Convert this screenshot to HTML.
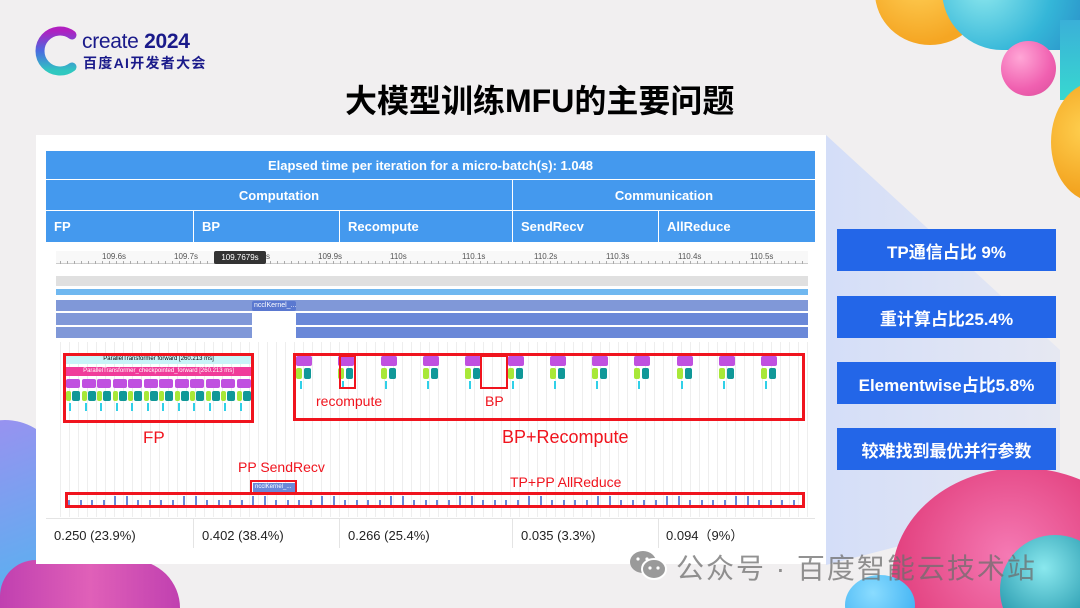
<!DOCTYPE html>
<html><head><meta charset="utf-8">
<style>
*{margin:0;padding:0;box-sizing:border-box}
html,body{width:1080px;height:608px;overflow:hidden}
body{background:#f1eff0;font-family:"Liberation Sans","Noto Sans CJK SC",sans-serif}
#wrap{position:relative;width:1080px;height:608px;overflow:hidden}
.abs{position:absolute}
.blob{position:absolute;border-radius:50%}
.hd{position:absolute;background:#4499ee;color:#fff;font-weight:bold;font-size:13px;display:flex;align-items:center}
.rb{position:absolute;left:837px;width:219px;height:42px;background:#2366e8;color:#fff;font-weight:bold;font-size:17px;display:flex;align-items:center;justify-content:center}
.red{position:absolute;border:3px solid #f0141e}
.rt{position:absolute;color:#f0141e;font-size:15px}
.val{position:absolute;top:528px;font-size:13px;color:#222;line-height:15px}
</style></head><body><div id="wrap">
<div class="blob" style="left:875px;top:-60px;width:110px;height:105px;background:radial-gradient(circle at 40% 35%,#ffd25a,#f5a623 70%)"></div>
<div class="abs" style="left:942px;top:-40px;width:138px;height:90px;border-radius:0 0 0 60px;background:radial-gradient(circle at 30% 30%,#8ee8ee,#34b6d8 60%,#2a90c8)"></div>
<div class="abs" style="left:1060px;top:20px;width:20px;height:80px;background:linear-gradient(#3ab0d8,#38d8d0)"></div>
<div class="blob" style="left:1001px;top:41px;width:55px;height:55px;background:radial-gradient(circle at 35% 30%,#ffa6d6,#f060b0 60%,#d84e9a)"></div>
<div class="blob" style="left:1051px;top:82px;width:90px;height:120px;background:radial-gradient(circle at 40% 40%,#ffd050,#f3a420 70%)"></div>
<div class="abs" style="left:826px;top:135px;width:234px;height:430px;background:linear-gradient(90deg,#d4def8,#e6e8f2);clip-path:polygon(0 0,100% 50%,100% 86%,0 100%)"></div>
<div class="blob" style="left:892px;top:468px;width:260px;height:220px;background:radial-gradient(circle at 45% 40%,#f57ab4,#e2407e 60%,#c83068)"></div>
<div class="blob" style="left:1000px;top:535px;width:110px;height:110px;background:radial-gradient(circle at 40% 30%,#8ae8ee,#2a9cb0 60%,#1c6a80)"></div>
<div class="blob" style="left:845px;top:575px;width:70px;height:60px;background:radial-gradient(circle at 40% 30%,#8adcff,#2ea8f0)"></div>
<div class="blob" style="left:-70px;top:420px;width:150px;height:200px;background:linear-gradient(160deg,#a08ef0,#4ab8f0)"></div>
<div class="abs" style="left:0;top:560px;width:180px;height:48px;border-radius:60px 80px 0 0;background:linear-gradient(90deg,#c040b0,#e060b8,#c040b0)"></div>

<svg class="abs" style="left:30px;top:25px" width="50" height="52" viewBox="0 0 50 52">
<defs><linearGradient id="lg" x1="0" y1="0" x2="0" y2="1"><stop offset="0" stop-color="#b020c0"/><stop offset="0.5" stop-color="#4a6be0"/><stop offset="1" stop-color="#30c8c0"/></linearGradient></defs>
<path d="M42 10 A20 20 0 1 0 42 42" fill="none" stroke="url(#lg)" stroke-width="9" stroke-linecap="round"/></svg>
<div class="abs" style="left:82px;top:30px;font-size:21px;color:#1a1a8a;letter-spacing:-0.3px">create <b>2024</b></div>
<div class="abs" style="left:83px;top:53px;font-size:14px;color:#1a1a8a;font-weight:bold;letter-spacing:1.3px">百度AI开发者大会</div>

<div class="abs" style="left:345px;top:76px;font-size:32px;font-weight:bold;color:#000">大模型训练MFU的主要问题</div>

<div class="abs" style="left:36px;top:135px;width:790px;height:429px;background:#fff"></div>
<div class="hd" style="left:46px;top:151px;width:769px;height:28px;justify-content:center">Elapsed time per iteration for a micro-batch(s): 1.048</div>
<div class="hd" style="left:46px;top:180px;width:466px;height:30px;justify-content:center">Computation</div>
<div class="hd" style="left:513px;top:180px;width:302px;height:30px;justify-content:center">Communication</div>
<div class="hd" style="left:46px;top:211px;width:147px;height:31px;padding-left:8px">FP</div>
<div class="hd" style="left:194px;top:211px;width:145px;height:31px;padding-left:8px">BP</div>
<div class="hd" style="left:340px;top:211px;width:172px;height:31px;padding-left:8px">Recompute</div>
<div class="hd" style="left:513px;top:211px;width:145px;height:31px;padding-left:8px">SendRecv</div>
<div class="hd" style="left:659px;top:211px;width:156px;height:31px;padding-left:8px">AllReduce</div>

<div id="tl" class="abs" style="left:0;top:0;width:1080px;height:608px"></div>
<div class="abs" style="left:56px;top:251px;width:752px;height:13px;border-bottom:1px solid #ccc;background:#f8f8f8"></div>
<div id="tl2" class="abs" style="left:0;top:0;width:1px;height:1px"></div>
<div class="abs" style="left:214px;top:251px;width:52px;height:13px;background:#333;color:#fff;font-size:8px;line-height:13px;text-align:center;border-radius:2px">109.7679s</div>
<div class="abs" style="left:56px;top:276px;width:752px;height:10px;background:#e0e0e0"></div>
<div class="abs" style="left:56px;top:289px;width:752px;height:6px;background:#70b8f0"></div>
<div class="abs" style="left:56px;top:300px;width:752px;height:11px;background:#8098d8"></div>
<div class="abs" style="left:56px;top:313px;width:196px;height:12px;background:#8098d8"></div>
<div class="abs" style="left:296px;top:313px;width:512px;height:12px;background:#6a88d8"></div>
<div class="abs" style="left:56px;top:327px;width:196px;height:11px;background:#8098d8"></div>
<div class="abs" style="left:296px;top:327px;width:512px;height:11px;background:#6a88d8"></div>
<div class="abs" style="left:252px;top:301px;width:44px;height:10px;background:#5a78d0;color:#fff;font-size:7px;line-height:10px;padding-left:2px;border-radius:2px">ncclKernel_...</div>

<div class="abs" style="left:66px;top:355px;width:185px;height:9px;background:#c8f4f8;font-size:6px;text-align:center;line-height:9px">ParallelTransformer forward [260.213 ms]</div>
<div class="abs" style="left:66px;top:367px;width:185px;height:9px;background:#f03c9a;color:#fff;font-size:6px;text-align:center;line-height:9px">ParallelTransformer_checkpointed_forward [260.213 ms]</div>

<div class="red" style="left:63px;top:353px;width:191px;height:70px"></div>
<div class="red" style="left:293px;top:353px;width:512px;height:68px"></div>
<div class="red" style="left:339px;top:355px;width:17px;height:34px;border-width:2px"></div>
<div class="red" style="left:480px;top:355px;width:28px;height:34px;border-width:2px"></div>
<div class="rt" style="left:143px;top:428px;font-size:17px">FP</div>
<div class="rt" style="left:316px;top:393px;font-size:14px">recompute</div>
<div class="rt" style="left:485px;top:393px;font-size:14px">BP</div>
<div class="rt" style="left:502px;top:427px;font-size:18px">BP+Recompute</div>
<div class="rt" style="left:238px;top:459px;font-size:14px">PP SendRecv</div>
<div class="rt" style="left:510px;top:474px;font-size:14px">TP+PP AllReduce</div>
<div class="abs" style="left:253px;top:483px;width:42px;height:9px;background:#6a88d8;color:#fff;font-size:6px;line-height:9px;padding-left:2px">ncclKernel_...</div>
<div class="red" style="left:250px;top:480px;width:47px;height:14px;border-width:2px"></div>
<div class="red" style="left:65px;top:492px;width:740px;height:16px"></div>

<div class="abs" style="left:46px;top:518px;width:769px;height:1px;background:#e4e4e4"></div>
<div class="abs" style="left:193px;top:518px;width:1px;height:30px;background:#e4e4e4"></div>
<div class="abs" style="left:339px;top:518px;width:1px;height:30px;background:#e4e4e4"></div>
<div class="abs" style="left:512px;top:518px;width:1px;height:30px;background:#e4e4e4"></div>
<div class="abs" style="left:658px;top:518px;width:1px;height:30px;background:#e4e4e4"></div>
<div class="val" style="left:54px">0.250 (23.9%)</div>
<div class="val" style="left:202px">0.402 (38.4%)</div>
<div class="val" style="left:348px">0.266 (25.4%)</div>
<div class="val" style="left:521px">0.035 (3.3%)</div>
<div class="val" style="left:666px">0.094（9%）</div>

<div class="rb" style="top:229px">TP通信占比 9%</div>
<div class="rb" style="top:296px">重计算占比25.4%</div>
<div class="rb" style="top:362px">Elementwise占比5.8%</div>
<div class="rb" style="top:428px">较难找到最优并行参数</div>

<svg class="abs" style="left:627px;top:548px" width="42" height="34" viewBox="0 0 42 34"><ellipse cx="16" cy="14" rx="13" ry="11" fill="#9a9a9a"/><ellipse cx="27" cy="21" rx="12" ry="10" fill="#9a9a9a" stroke="#fff" stroke-width="2"/><circle cx="23" cy="20" r="1.6" fill="#fff"/><circle cx="31" cy="20" r="1.6" fill="#fff"/><circle cx="11" cy="11" r="1.6" fill="#fff"/><circle cx="20" cy="11" r="1.6" fill="#fff"/></svg>
<div class="abs" style="left:676px;top:547px;font-size:28px;color:rgba(110,110,110,0.75);letter-spacing:2px;white-space:nowrap">公众号 · 百度智能云技术站</div>
</div>
<script>
var h='',h2='';
function d(x,y,w,hh,c,extra){h+='<div style="position:absolute;left:'+x+'px;top:'+y+'px;width:'+w+'px;height:'+hh+'px;background:'+c+';'+(extra||'')+'"></div>';}
var lab=['109.6s','109.7s','109.8s','109.9s','110s','110.1s','110.2s','110.3s','110.4s','110.5s'];
for(var i=0;i<10;i++){h2+='<div style="position:absolute;left:'+(102+i*72)+'px;top:252px;font-size:8px;color:#555;white-space:nowrap">'+lab[i]+'</div>';}
for(var x=60;x<808;x+=7)h2+='<div style="position:absolute;left:'+x+'px;top:261px;width:1px;height:3px;background:#aaa"></div>';
for(var x=60;x<808;x+=9)d(x,342,1,175,'#eee');
document.getElementById('tl').innerHTML=h;h='';
for(var x=60;x<250;x+=4)d(x,302,1,36,'rgba(255,255,255,0.6)');
for(var x=298;x<808;x+=5)d(x,314,1,24,'rgba(255,255,255,0.5)');
for(var i=0;i<12;i++){var x=66+i*15.5;d(x,379,14,9,'#c050e0','border-radius:2px');d(x,391,5,10,'#a8e838','border-radius:2px');d(x+6,391,8,10,'#109898','border-radius:2px');d(x+3,403,2,8,'#30d0e8');}
for(var i=0;i<12;i++){var x=296+i*42.3;d(x,356,16,10,'#c050e0','border-radius:2px');d(x,368,6,11,'#a8e838','border-radius:2px');d(x+8,368,7,11,'#109898','border-radius:2px');d(x+4,381,2,8,'#30d0e8');}
for(var x=68;x<800;x+=11.5){var hh=(Math.round(x)%3==0)?9:5;d(x,505-hh,2,hh,'#6a88d8');}
document.getElementById('tl2').innerHTML=h2+h;
</script>
</body></html>
